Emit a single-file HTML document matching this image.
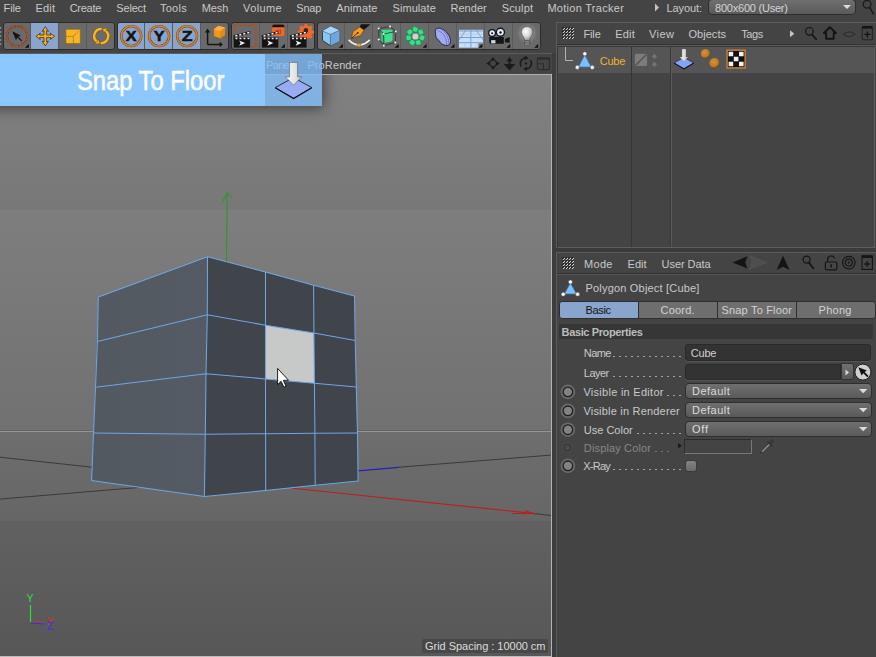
<!DOCTYPE html>
<html lang="en"><head><meta charset="utf-8"><title>Snap To Floor</title>
<style>
html,body{margin:0;padding:0;}
body{width:876px;height:657px;overflow:hidden;background:#444444;position:relative;font-family:"Liberation Sans",sans-serif;}
.t{position:absolute;white-space:pre;line-height:1;font-family:"Liberation Sans",sans-serif;}
.a{position:absolute;box-sizing:border-box;}
svg{position:absolute;overflow:visible;}
.grp{position:absolute;box-sizing:border-box;top:22px;height:28px;background:#6a6a6a;border:1px solid #2c2c2c;border-radius:3px;}
.sep{position:absolute;top:23px;height:26px;width:1px;background:#5a5a5a;}
.sel{position:absolute;top:23px;height:26px;background:#89a5ce;}
.dd{position:absolute;box-sizing:border-box;height:16px;border:1px solid #2e2e2e;border-radius:4px;background:linear-gradient(#6f6f6f,#5a5a5a);}
.fld{position:absolute;box-sizing:border-box;background:#333333;border:1px solid #2a2a2a;border-radius:3px;box-shadow:0 1px 0 #555;}
.tab{position:absolute;box-sizing:border-box;top:301px;height:18px;background:#6e6e6e;border:1px solid #2e2e2e;}
.radio{position:absolute;box-sizing:border-box;width:11px;height:11px;border-radius:50%;background:#808080;border:1.4px solid #1f1f1f;box-shadow:0 0 0 1.9px #6a6a6a;}
.dots{position:absolute;left:0;height:1px;width:876px;}
.dots i{position:absolute;top:0;width:2px;height:1px;background:var(--c);}

</style></head>
<body>
<div class="a" id="menubar" style="left:0;top:0;width:876px;height:20px;">
<span class="t" id="t0" style="left:3.6px;top:2.99px;font-size:11px;color:#c9c9c9;letter-spacing:-0.145px;">File</span>
<span class="t" id="t1" style="left:35.5px;top:2.99px;font-size:11px;color:#c9c9c9;letter-spacing:0.210px;">Edit</span>
<span class="t" id="t2" style="left:69.7px;top:2.99px;font-size:11px;color:#c9c9c9;letter-spacing:-0.286px;">Create</span>
<span class="t" id="t3" style="left:116.3px;top:2.99px;font-size:11px;color:#c9c9c9;letter-spacing:-0.176px;">Select</span>
<span class="t" id="t4" style="left:160.0px;top:2.99px;font-size:11px;color:#c9c9c9;letter-spacing:0.253px;">Tools</span>
<span class="t" id="t5" style="left:201.7px;top:2.99px;font-size:11px;color:#c9c9c9;letter-spacing:-0.102px;">Mesh</span>
<span class="t" id="t6" style="left:243.0px;top:2.99px;font-size:11px;color:#c9c9c9;letter-spacing:0.399px;">Volume</span>
<span class="t" id="t7" style="left:296.3px;top:2.99px;font-size:11px;color:#c9c9c9;letter-spacing:-0.234px;">Snap</span>
<span class="t" id="t8" style="left:336.3px;top:2.99px;font-size:11px;color:#c9c9c9;letter-spacing:0.140px;">Animate</span>
<span class="t" id="t9" style="left:392.5px;top:2.99px;font-size:11px;color:#c9c9c9;letter-spacing:0.072px;">Simulate</span>
<span class="t" id="t10" style="left:450.5px;top:2.99px;font-size:11px;color:#c9c9c9;letter-spacing:0.024px;">Render</span>
<span class="t" id="t11" style="left:501.7px;top:2.99px;font-size:11px;color:#c9c9c9;letter-spacing:0.144px;">Sculpt</span>
<span class="t" id="t12" style="left:547.4px;top:2.99px;font-size:11px;color:#c9c9c9;letter-spacing:0.281px;">Motion Tracker</span>
<span class="t" id="t13" style="left:666.5px;top:2.99px;font-size:11px;color:#c9c9c9;letter-spacing:-0.099px;">Layout:</span>
<svg style="left:654px;top:3px" width="6" height="9"><path d="M1 0.5 L5 4.5 L1 8.5Z" fill="#c4c4c4"/></svg>
<div class="dd" style="left:708px;top:-1px;width:148px;"></div>
<span class="t" id="t14" style="left:715.0px;top:2.69px;font-size:11px;color:#d4d4d4;letter-spacing:-0.218px;">800x600 (User)</span>
<svg style="left:843px;top:5px" width="9" height="5"><path d="M0 0 H8 L4 4Z" fill="#dcdcdc"/></svg>
<svg style="left:860px;top:0px" width="16" height="17" viewBox="860 0 16 17"><circle cx="867.1" cy="4.3" r="3.9" fill="none" stroke="#1a1a1a" stroke-width="1.2"/><path d="M869.6 7.3 L873.8 14.3" stroke="#1a1a1a" stroke-width="1.6"/></svg>
</div>
<div class="a" id="toolbar" style="left:0;top:20px;width:552px;height:32px;">
</div>
<svg style="left:0;top:27px" width="3" height="20"><path d="M0 1h1.2M0 5h1.2M0 9h1.2M0 13h1.2M0 17h1.2" stroke="#c8c8c8" stroke-width="1.2"/></svg>
<div class="grp" style="left:2.50px;width:112.40px;"></div>
<div class="grp" style="left:116.80px;width:112.00px;"></div>
<div class="grp" style="left:230.90px;width:84.50px;"></div>
<div class="grp" style="left:316.50px;width:224.00px;"></div>
<div class="sel" style="left:31.00px;width:27.4px;"></div>
<div class="sel" style="left:117.80px;width:82.50px;border-radius:2px 0 0 2px;"></div>
<div class="sep" style="left:30.30px;"></div>
<div class="sep" style="left:58.20px;"></div>
<div class="sep" style="left:86.10px;"></div>
<div class="sep" style="left:144.20px;"></div>
<div class="sep" style="left:172.10px;"></div>
<div class="sep" style="left:200.00px;"></div>
<div class="sep" style="left:258.70px;"></div>
<div class="sep" style="left:286.60px;"></div>
<div class="sep" style="left:344.30px;"></div>
<div class="sep" style="left:372.20px;"></div>
<div class="sep" style="left:400.10px;"></div>
<div class="sep" style="left:428.00px;"></div>
<div class="sep" style="left:455.90px;"></div>
<div class="sep" style="left:483.80px;"></div>
<div class="sep" style="left:511.70px;"></div>
<div class="a" id="vp-frame" style="left:0;top:53px;width:553px;height:604px;border-top:1px solid #5c5c5c;"></div>
<span class="t" id="t15" style="left:266.0px;top:59.99px;font-size:11px;color:#c9c9c9;letter-spacing:-0.610px;">Panel</span>
<span class="t" id="t16" style="left:307.4px;top:59.99px;font-size:11px;color:#c9c9c9;letter-spacing:0.112px;">ProRender</span>
<div class="a" id="om" style="left:556px;top:22px;width:321px;height:226px;border-left:1px solid #5c5c5c;border-top:1px solid #5c5c5c;"></div>
<div class="a" style="left:557px;top:44px;width:319px;height:1px;background:#333;"></div>
<div class="a" style="left:557px;top:45px;width:319px;height:1px;background:#5a5a5a;"></div>
<div class="a" id="om-tree" style="left:557px;top:46px;width:318px;height:202px;background:#444444;border:1px solid #383838;border-right-color:#5e5e5e;border-bottom-color:#5e5e5e;"></div>
<div class="a" id="om-row" style="left:558px;top:47px;width:316px;height:26px;background:#555555;"></div>
<div class="a" style="left:631px;top:47px;width:1px;height:200px;background:#353535;"></div>
<div class="a" style="left:670px;top:47px;width:1px;height:200px;background:#383838;"></div><div class="a" style="left:671px;top:47px;width:1px;height:200px;background:#5a5a5a;"></div>
<span class="t" id="t17" style="left:583.5px;top:29.19px;font-size:11px;color:#c9c9c9;letter-spacing:-0.145px;">File</span>
<span class="t" id="t18" style="left:615.3px;top:29.19px;font-size:11px;color:#c9c9c9;letter-spacing:0.144px;">Edit</span>
<span class="t" id="t19" style="left:649.0px;top:29.19px;font-size:11px;color:#c9c9c9;letter-spacing:0.448px;">View</span>
<span class="t" id="t20" style="left:688.5px;top:29.19px;font-size:11px;color:#c9c9c9;letter-spacing:0.034px;">Objects</span>
<span class="t" id="t21" style="left:741.2px;top:29.19px;font-size:11px;color:#c9c9c9;letter-spacing:-0.383px;">Tags</span>
<span class="t" id="t22" style="left:599.7px;top:55.79px;font-size:11px;color:#f2b32c;letter-spacing:-0.232px;">Cube</span>
<div class="a" id="am" style="left:556px;top:252px;width:321px;height:406px;border-left:1px solid #5c5c5c;border-top:1px solid #5c5c5c;"></div>
<div class="a" style="left:557px;top:273px;width:319px;height:1px;background:#333;"></div>
<div class="a" style="left:557px;top:274px;width:319px;height:1px;background:#555;"></div>
<div class="a" style="left:552px;top:248px;width:324px;height:4px;background:#3b3b3b;"></div>
<span class="t" id="t23" style="left:584.0px;top:259.49px;font-size:11px;color:#c9c9c9;letter-spacing:0.323px;">Mode</span>
<span class="t" id="t24" style="left:627.6px;top:259.49px;font-size:11px;color:#c9c9c9;letter-spacing:0.010px;">Edit</span>
<span class="t" id="t25" style="left:661.6px;top:259.49px;font-size:11px;color:#c9c9c9;letter-spacing:-0.054px;">User Data</span>
<span class="t" id="t26" style="left:585.5px;top:282.99px;font-size:11px;color:#c9c9c9;letter-spacing:0.191px;">Polygon Object [Cube]</span>
<div class="tab" style="left:559.0px;width:80.0px;background:#89a5ce;border-radius:3px 0 0 3px;"></div>
<span class="t" id="t27" style="left:585.5px;top:305.19px;font-size:11px;color:#141414;letter-spacing:-0.327px;">Basic</span>
<div class="tab" style="left:638.0px;width:80.0px;"></div>
<span class="t" id="t28" style="left:660.6px;top:305.19px;font-size:11px;color:#d2d2d2;letter-spacing:0.194px;">Coord.</span>
<div class="tab" style="left:717.0px;width:80.0px;"></div>
<span class="t" id="t29" style="left:721.5px;top:305.19px;font-size:11px;color:#d2d2d2;letter-spacing:0.184px;">Snap To Floor</span>
<div class="tab" style="left:796.0px;width:80.0px;border-radius:0 3px 3px 0;"></div>
<span class="t" id="t30" style="left:818.6px;top:305.19px;font-size:11px;color:#d2d2d2;letter-spacing:0.272px;">Phong</span>
<div class="a" style="left:559px;top:324px;width:314px;height:15px;background:#363636;"></div>
<span class="t" id="t31" style="left:561.6px;top:326.99px;font-size:11px;color:#bcbcbc;font-weight:bold;letter-spacing:-0.375px;">Basic Properties</span>
<span class="t" id="t32" style="left:583.8px;top:348.19px;font-size:11px;color:#c9c9c9;letter-spacing:-0.581px;">Name</span>
<div class="dots" style="top:356px;--c:#a2a2a2"><i style="left:679px"></i><i style="left:673px"></i><i style="left:667px"></i><i style="left:661px"></i><i style="left:655px"></i><i style="left:649px"></i><i style="left:643px"></i><i style="left:637px"></i><i style="left:631px"></i><i style="left:625px"></i><i style="left:619px"></i><i style="left:613px"></i></div>
<span class="t" id="t33" style="left:583.8px;top:367.79px;font-size:11px;color:#c9c9c9;letter-spacing:-0.533px;">Layer</span>
<div class="dots" style="top:376px;--c:#a2a2a2"><i style="left:679px"></i><i style="left:673px"></i><i style="left:667px"></i><i style="left:661px"></i><i style="left:655px"></i><i style="left:649px"></i><i style="left:643px"></i><i style="left:637px"></i><i style="left:631px"></i><i style="left:625px"></i><i style="left:619px"></i><i style="left:613px"></i></div>
<span class="t" id="t34" style="left:583.4px;top:386.89px;font-size:11px;color:#c9c9c9;letter-spacing:0.280px;">Visible in Editor</span>
<div class="dots" style="top:395px;--c:#a2a2a2"><i style="left:679px"></i><i style="left:673px"></i><i style="left:667px"></i></div>
<span class="t" id="t35" style="left:583.4px;top:405.69px;font-size:11px;color:#c9c9c9;letter-spacing:0.203px;">Visible in Renderer</span>
<span class="t" id="t36" style="left:583.8px;top:424.69px;font-size:11px;color:#c9c9c9;">Use Color</span>
<div class="dots" style="top:433px;--c:#a2a2a2"><i style="left:679px"></i><i style="left:673px"></i><i style="left:667px"></i><i style="left:661px"></i><i style="left:655px"></i><i style="left:649px"></i><i style="left:643px"></i><i style="left:637px"></i></div>
<span class="t" id="t37" style="left:583.8px;top:442.99px;font-size:11px;color:#878787;letter-spacing:0.148px;">Display Color</span>
<div class="dots" style="top:451px;--c:#747474"><i style="left:667px"></i><i style="left:661px"></i><i style="left:655px"></i></div>
<span class="t" id="t38" style="left:583.2px;top:460.59px;font-size:11px;color:#c9c9c9;letter-spacing:-0.741px;">X-Ray</span>
<div class="dots" style="top:469px;--c:#a2a2a2"><i style="left:679px"></i><i style="left:673px"></i><i style="left:667px"></i><i style="left:661px"></i><i style="left:655px"></i><i style="left:649px"></i><i style="left:643px"></i><i style="left:637px"></i><i style="left:631px"></i><i style="left:625px"></i><i style="left:619px"></i><i style="left:613px"></i></div>
<div class="fld" style="left:685px;top:344px;width:186px;height:17px;"></div>
<span class="t" id="t39" style="left:690.7px;top:348.19px;font-size:11px;color:#d0d0d0;letter-spacing:-0.166px;">Cube</span>
<div class="fld" style="left:685px;top:364px;width:156px;height:16px;border-radius:3px 0 0 3px;"></div>
<div class="a" style="left:841px;top:363px;width:12.5px;height:17px;background:linear-gradient(#707070,#5a5a5a);border:1px solid #333;border-radius:0 3px 3px 0;"></div>
<svg style="left:845px;top:369px" width="5" height="7"><path d="M0.5 0.5 L4 3.5 L0.5 6.5Z" fill="#d8d8d8"/></svg>
<div class="dd" style="left:685px;top:383px;width:187px;"></div>
<span class="t" id="t40" style="left:692.0px;top:386.39px;font-size:11px;color:#dcdcdc;letter-spacing:0.490px;">Default</span>
<svg style="left:858.8px;top:388.8px" width="9" height="5"><path d="M0 0 H8.4 L4.2 4.2Z" fill="#dcdcdc"/></svg>
<div class="dd" style="left:685px;top:402px;width:187px;"></div>
<span class="t" id="t41" style="left:692.0px;top:405.39px;font-size:11px;color:#dcdcdc;letter-spacing:0.490px;">Default</span>
<svg style="left:858.8px;top:407.8px" width="9" height="5"><path d="M0 0 H8.4 L4.2 4.2Z" fill="#dcdcdc"/></svg>
<div class="dd" style="left:685px;top:421px;width:187px;"></div>
<span class="t" id="t42" style="left:692.0px;top:424.39px;font-size:11px;color:#dcdcdc;letter-spacing:0.758px;">Off</span>
<svg style="left:858.8px;top:426.8px" width="9" height="5"><path d="M0 0 H8.4 L4.2 4.2Z" fill="#dcdcdc"/></svg>
<svg id="radios" style="left:556px;top:380px" width="24" height="100" viewBox="556 380 24 100"><circle cx="567.9" cy="391.9" r="7.3" fill="#6a6a6a"/><circle cx="567.9" cy="391.9" r="5.45" fill="#1e1e1e"/><circle cx="567.9" cy="391.9" r="4.15" fill="#828282"/><circle cx="567.9" cy="410.8" r="7.3" fill="#6a6a6a"/><circle cx="567.9" cy="410.8" r="5.45" fill="#1e1e1e"/><circle cx="567.9" cy="410.8" r="4.15" fill="#828282"/><circle cx="567.9" cy="429.7" r="7.3" fill="#6a6a6a"/><circle cx="567.9" cy="429.7" r="5.45" fill="#1e1e1e"/><circle cx="567.9" cy="429.7" r="4.15" fill="#828282"/><circle cx="567.9" cy="465.8" r="7.3" fill="#6a6a6a"/><circle cx="567.9" cy="465.8" r="5.45" fill="#1e1e1e"/><circle cx="567.9" cy="465.8" r="4.15" fill="#828282"/><circle cx="567.3" cy="447.5" r="5.3" fill="#4b4b4b"/><circle cx="567.3" cy="447.5" r="4" fill="#383838"/><circle cx="567.3" cy="447.5" r="2.6" fill="#4a4a4a"/></svg>
<svg style="left:678px;top:443px" width="5" height="6"><path d="M0 0 L4 2.8 L0 5.6Z" fill="#1c1c1c"/></svg>
<div class="a" style="left:684px;top:439px;width:68px;height:15px;border:1px solid #777;border-top-color:#2c2c2c;border-left-color:#2c2c2c;background:#444;"></div>
<div class="a" style="left:684.5px;top:459.5px;width:12px;height:12px;border-radius:3px;background:linear-gradient(#828282,#6a6a6a);border:1px solid #3a3a3a;"></div>
<svg id="view3d" style="left:0px;top:74px" width="552" height="583" viewBox="0 0 552 583">
<defs>
<linearGradient id="sky1" x1="0" y1="0" x2="0" y2="1"><stop offset="0" stop-color="#818181"/><stop offset="1" stop-color="#787878"/></linearGradient>
<linearGradient id="sky2" x1="0" y1="0" x2="0" y2="1"><stop offset="0" stop-color="#7e7e7e"/><stop offset="1" stop-color="#717171"/></linearGradient>
<linearGradient id="gnd1" x1="0" y1="0" x2="0" y2="1"><stop offset="0" stop-color="#6e6e6e"/><stop offset="1" stop-color="#666666"/></linearGradient>
<linearGradient id="gnd2" x1="0" y1="0" x2="0" y2="1"><stop offset="0" stop-color="#616161"/><stop offset="1" stop-color="#575757"/></linearGradient>
<linearGradient id="shd" x1="0" y1="0" x2="0" y2="1"><stop offset="0" stop-color="#000" stop-opacity="0.35"/><stop offset="1" stop-color="#000" stop-opacity="0"/></linearGradient>
<linearGradient id="lf" x1="0" y1="0" x2="1" y2="0"><stop offset="0" stop-color="#525960"/><stop offset="1" stop-color="#545b64"/></linearGradient>
</defs>
<rect x="0" y="0" width="552" height="136" fill="url(#sky1)"/>
<rect x="0" y="136" width="552" height="221" fill="url(#sky2)"/>
<rect x="0" y="357" width="552" height="90" fill="url(#gnd1)"/>
<rect x="0" y="447" width="552" height="136" fill="url(#gnd2)"/>
<rect x="0" y="356" width="552" height="1" fill="#646464"/><rect x="0" y="357" width="552" height="1" fill="#969696"/>
<polyline points="0.0,383.2 92.0,393.2" stroke="#3a3a3a" stroke-width="1" fill="none"/>
<polyline points="0.0,425.1 140.6,413.3" stroke="#3a3a3a" stroke-width="1" fill="none"/>
<polyline points="398.0,393.3 552.0,381.0" stroke="#3a3a3a" stroke-width="1" fill="none"/>
<polyline points="534.6,439.6 552.0,441.6" stroke="#3a3a3a" stroke-width="1" fill="none"/>
<polyline points="358.0,396.8 398.5,393.3" stroke="#2222b4" stroke-width="1.2" fill="none"/>
<polyline points="292.4,414.2 534.6,439.6" stroke="#bc1e1e" stroke-width="1.1" fill="none"/>
<polyline points="512.0,439.5 534.6,439.6 524.5,436.6" stroke="#bc1e1e" fill="none" stroke-width="1"/>
<polyline points="227.2,119.5 226.5,188.0" stroke="#229a22" stroke-width="1.0" fill="none"/>
<polyline points="221.6,129.4 227.3,118.8 232.6,124.4" stroke="#229a22" fill="none" stroke-width="1"/>
<polygon points="98.3,223.0 207.5,182.7 204.4,422.5 91.6,406.5" fill="url(#lf)"/>
<polygon points="207.5,182.7 354.5,222.0 358.1,407.0 204.4,422.5" fill="#40444b"/>
<polygon points="265.5,251.2 313.9,259.0 314.4,309.3 265.5,304.9" fill="#c7c9c9"/>
<polyline points="98.3,223.0 207.5,182.7 265.5,198.0 313.6,211.2 354.5,222.0" stroke="#6fa5e2" stroke-width="1.05" fill="none"/>
<polyline points="97.4,267.4 207.3,240.7 265.5,251.2 313.9,259.0 355.2,266.6" stroke="#6fa5e2" stroke-width="1.05" fill="none"/>
<polyline points="95.5,313.3 206.0,299.7 265.5,304.9 314.4,309.3 356.3,313.0" stroke="#6fa5e2" stroke-width="1.05" fill="none"/>
<polyline points="93.5,359.1 205.3,360.3 265.6,359.7 314.9,359.3 357.5,359.0" stroke="#6fa5e2" stroke-width="1.05" fill="none"/>
<polyline points="91.6,406.5 204.4,422.5 265.7,416.5 315.2,411.3 358.1,407.0" stroke="#6fa5e2" stroke-width="1.05" fill="none"/>
<polyline points="98.3,223.0 97.4,267.4 95.5,313.3 93.5,359.1 91.6,406.5" stroke="#6fa5e2" stroke-width="1.05" fill="none"/>
<polyline points="207.5,182.7 207.3,240.7 206.0,299.7 205.3,360.3 204.4,422.5" stroke="#6fa5e2" stroke-width="1.05" fill="none"/>
<polyline points="265.5,198.0 265.5,251.2 265.5,304.9 265.6,359.7 265.7,416.5" stroke="#6fa5e2" stroke-width="1.05" fill="none"/>
<polyline points="313.6,211.2 313.9,259.0 314.4,309.3 314.9,359.3 315.2,411.3" stroke="#6fa5e2" stroke-width="1.05" fill="none"/>
<polyline points="354.5,222.0 355.2,266.6 356.3,313.0 357.5,359.0 358.1,407.0" stroke="#6fa5e2" stroke-width="1.05" fill="none"/>
<polyline points="30.5,531.0 30.5,548.5" stroke="#30e030" stroke-width="1.2" fill="none"/>
<polyline points="30.5,548.5 43.0,547.3" stroke="#d03030" stroke-width="1" fill="none"/>
<polyline points="30.5,549.0 43.5,550.0" stroke="#3030e0" stroke-width="1" fill="none"/>
</svg>
<span class="t" id="t43" style="left:26.6px;top:593.41px;font-size:10.5px;color:#30e030;">Y</span>
<span class="t" id="t44" style="left:46.8px;top:616.41px;font-size:10.5px;color:#d83030;">X</span>
<span class="t" id="t45" style="left:47.0px;top:620.61px;font-size:10.5px;color:#3434f0;">Z</span>
<div class="a" style="left:0;top:74px;width:552px;height:1px;background:#b0b0b0;"></div>
<div class="a" style="left:551px;top:74px;width:1px;height:583px;background:#b4b4b4;"></div>
<div class="a" style="left:0;top:656px;width:552px;height:1px;background:#bcbcbc;"></div>
<div class="a" style="left:552px;top:53px;width:4px;height:604px;background:#3d3d3d;"></div>
<div class="a" style="left:422px;top:639px;width:126px;height:14px;background:rgba(62,62,62,0.6);border-radius:2px;"></div>
<span class="t" id="t46" style="left:425.0px;top:640.99px;font-size:11px;color:#dcdcdc;letter-spacing:-0.026px;">Grid Spacing : 10000 cm</span>
<div class="a" style="left:0;top:75px;width:551px;height:120px;overflow:hidden;"><div class="a" style="left:-20px;top:-21px;width:342px;height:52px;box-shadow:0 0 14px 2px rgba(0,0,0,0.5);"></div></div>
<div class="a" id="banner" style="left:0;top:54px;width:265px;height:52px;background:#8cc8fe;"></div>
<div class="a" id="banner2" style="left:265px;top:54px;width:57px;height:52px;background:rgba(130,190,250,0.80);"></div>
<span class="t" id="t47" style="left:77.0px;top:67.10px;font-size:28px;color:#ffffff;transform-origin:0 0;transform:scaleX(0.848);-webkit-text-stroke:0.55px #fff;">Snap To Floor</span>
<svg style="left:270px;top:58px" width="48" height="46" viewBox="270 58 48 46">
<defs><linearGradient id="arw" x1="0" y1="0" x2="1" y2="0"><stop offset="0" stop-color="#f4f4f4"/><stop offset="0.6" stop-color="#e4e4e4"/><stop offset="1" stop-color="#bdbdbd"/></linearGradient></defs>
<path d="M275.2 87.6 L293.5 77.6 L311.8 87.6 L293.6 98.4Z" fill="#98acf2" stroke="#1c1c2a" stroke-width="0.9" stroke-linejoin="round"/>
<path d="M275.2 87.8 L293.6 98.6 L311.8 87.8" fill="none" stroke="#14141c" stroke-width="1.3"/>
<path d="M289.5 62.4 H297.6 V76.8 H301.7 L293.6 85.2 L285.4 76.8 H289.5Z" fill="url(#arw)" stroke="#4a5260" stroke-width="0.55"/>
</svg>
<svg style="left:277px;top:367px" width="14" height="22" viewBox="0 0 14 22">
<path d="M0.6 1.4 V17.6 L4.1 14.3 L6.9 20.2 L9 19.2 L6.4 13.3 H11.5Z" fill="#ffffff" stroke="#0c0c0c" stroke-width="0.9" stroke-linejoin="miter"/></svg>
<svg id="icons" style="left:0;top:0" width="876" height="657" viewBox="0 0 876 657">
<defs>
<linearGradient id="cubeT" x1="0" y1="0" x2="0" y2="1"><stop offset="0" stop-color="#b9dcf8"/><stop offset="1" stop-color="#8fc2ee"/></linearGradient>
<radialGradient id="sph" cx="0.42" cy="0.38" r="0.62"><stop offset="0" stop-color="#d4923a"/><stop offset="0.7" stop-color="#c07a26"/><stop offset="1" stop-color="#6e4010"/></radialGradient>
<linearGradient id="arw2" x1="0" y1="0" x2="1" y2="0"><stop offset="0" stop-color="#fafafa"/><stop offset="1" stop-color="#c4c4c4"/></linearGradient>
<radialGradient id="bulb" cx="0.38" cy="0.36" r="0.7"><stop offset="0" stop-color="#ffffff"/><stop offset="0.5" stop-color="#d8d8d8"/><stop offset="1" stop-color="#8c8c8c"/></radialGradient>
<radialGradient id="glow" cx="0.5" cy="0.5" r="0.5"><stop offset="0" stop-color="#fff" stop-opacity="0.4"/><stop offset="1" stop-color="#fff" stop-opacity="0"/></radialGradient>
</defs>
<circle cx="17.2" cy="36.1" r="10.2" fill="none" stroke="#5a3a2a" stroke-width="2"/><circle cx="17.2" cy="36.1" r="10.2" fill="none" stroke="#dc6428" stroke-width="1.2" stroke-dasharray="1.1 0.4"/>
<path d="M12.2 31.2 L20.9 35.6 L18.3 36.6 L22.2 40.4 L21.3 41.3 L17.4 37.5 L16 40.3Z" fill="#151515"/>
<path d="M24.9 47.7 H28.9 V43.7Z" fill="#121212"/>
<path d="M45.3 26.7 L48.5 31.4 L46.6 30.7 V35 H51 L50.3 33.1 L54.5 36.3 L50.3 39.5 L51 37.6 H46.6 V41.9 L48.5 41.2 L45.3 45.8 L42.1 41.2 L44 41.9 V37.6 H39.6 L40.3 39.5 L36 36.3 L40.3 33.1 L39.6 35 H44 V30.7 L42.1 31.4Z" fill="#f6ae22" stroke="#4a3412" stroke-width="0.8" stroke-linejoin="round"/>
<rect x="65.9" y="29.3" width="14.4" height="14.3" rx="1" fill="#f8b424" stroke="#8a6412" stroke-width="0.6"/><path d="M66 36.4 H73.4 V43.4 M73.4 36.4 L78.4 31.2" fill="none" stroke="#7a6a20" stroke-width="0.8" stroke-dasharray="1.3 0.8"/>
<path d="M101.8 29.1 A7 7 0 0 0 97.2 41.8" fill="none" stroke="#6a4a10" stroke-width="3.3"/><path d="M101.8 29.1 A7 7 0 0 0 97.2 41.8" fill="none" stroke="#f8b424" stroke-width="2.5"/>
<path d="M100.6 43.1 A7 7 0 0 0 105.2 30.4" fill="none" stroke="#6a4a10" stroke-width="3.3"/><path d="M100.6 43.1 A7 7 0 0 0 105.2 30.4" fill="none" stroke="#f8b424" stroke-width="2.5"/>
<path d="M99.9 43.7 L94.6 43.9 L98.6 39.4Z" fill="#f8b424" stroke="#6a4a10" stroke-width="0.5"/><path d="M102.5 28.5 L107.9 28.3 L103.8 32.8Z" fill="#f8b424" stroke="#6a4a10" stroke-width="0.5"/>
<circle cx="131.2" cy="36.1" r="10" fill="none" stroke="#5e4226" stroke-width="2.4"/><circle cx="131.2" cy="36.1" r="10" fill="none" stroke="#dc8228" stroke-width="1.5"/>
<text x="131.2" y="40.9" text-anchor="middle" textLength="10.8" lengthAdjust="spacingAndGlyphs" style="font-family:'Liberation Sans',sans-serif;font-weight:700;font-size:14px" fill="#141414" stroke="#141414" stroke-width="0.5">X</text>
<circle cx="159.1" cy="36.1" r="10" fill="none" stroke="#5e4226" stroke-width="2.4"/><circle cx="159.1" cy="36.1" r="10" fill="none" stroke="#dc8228" stroke-width="1.5"/>
<text x="159.1" y="40.9" text-anchor="middle" textLength="10.8" lengthAdjust="spacingAndGlyphs" style="font-family:'Liberation Sans',sans-serif;font-weight:700;font-size:14px" fill="#141414" stroke="#141414" stroke-width="0.5">Y</text>
<circle cx="187.1" cy="36.1" r="10" fill="none" stroke="#5e4226" stroke-width="2.4"/><circle cx="187.1" cy="36.1" r="10" fill="none" stroke="#dc8228" stroke-width="1.5"/>
<text x="187.1" y="40.9" text-anchor="middle" textLength="10.8" lengthAdjust="spacingAndGlyphs" style="font-family:'Liberation Sans',sans-serif;font-weight:700;font-size:14px" fill="#141414" stroke="#141414" stroke-width="0.5">Z</text>
<path d="M207.6 44.4 V30 M207.6 44.4 H220.6" stroke="#151515" stroke-width="1.5" fill="none"/><path d="M205 32.6 L207.6 28.6 L210.2 32.6Z M219.6 41.8 L223 44.4 L219.6 47Z" fill="#151515"/>
<path d="M213.6 29.2 L218.4 25.8 L225.2 27.6 L225 35 L220.2 38.4 L213.8 36.4Z" fill="#f2981e" stroke="#8a5610" stroke-width="0.5"/><path d="M213.6 29.2 L218.4 25.8 L225.2 27.6 L220.2 31Z" fill="#f8b04a"/><path d="M220.2 31 L225.2 27.6 L225 35 L220.2 38.4Z" fill="#e08c18"/>
<path d="M234.9 32.4 V25.3 H255.9 V46.8 H251.2" fill="none" stroke="#a4522a" stroke-width="1.5"/>
<rect x="233.7" y="38.2" width="16.4" height="9.4" fill="#141414"/><path d="M233.29999999999998 35.2 L250.1 31 L250.4 33.4 L233.7 37.6Z" fill="#1a1a1a"/><path d="M235.1 35.3 l2.1 -0.55 l0.3 1.5 l-2.1 0.55Z" fill="#f4f4f4"/><path d="M239.1 34.3 l2.1 -0.55 l0.3 1.5 l-2.1 0.55Z" fill="#f4f4f4"/><path d="M243.1 33.3 l2.1 -0.55 l0.3 1.5 l-2.1 0.55Z" fill="#f4f4f4"/><path d="M247.1 32.2 l2.1 -0.55 l0.3 1.5 l-2.1 0.55Z" fill="#f4f4f4"/><rect x="233.7" y="37.3" width="16.4" height="2.4" fill="#1a1a1a"/><rect x="235.5" y="37.7" width="1.9" height="1.5" fill="#ececec"/><rect x="239.5" y="37.7" width="1.9" height="1.5" fill="#ececec"/><rect x="243.5" y="37.7" width="1.9" height="1.5" fill="#ececec"/><rect x="247.5" y="37.7" width="1.9" height="1.5" fill="#ececec"/><path d="M239.1 40.6 L245.1 43.1 L239.1 45.7 L240.7 43.1Z" fill="#f6f6f6"/>
<rect x="272.2" y="24.6" width="12.2" height="11.4" rx="1.6" fill="#f4662c"/><path d="M272.2 27.2 V26.2 a1.6 1.6 0 0 1 1.6 -1.6 h9 a1.6 1.6 0 0 1 1.6 1.6 V27.2Z" fill="#141414"/><path d="M275.6 30.4 H280.6 V33.6 H276" fill="none" stroke="#c04a1c" stroke-width="1.2"/>
<rect x="261.9" y="38.2" width="16.4" height="9.4" fill="#141414"/><path d="M261.5 35.2 L278.29999999999995 31 L278.59999999999997 33.4 L261.9 37.6Z" fill="#1a1a1a"/><path d="M263.3 35.3 l2.1 -0.55 l0.3 1.5 l-2.1 0.55Z" fill="#f4f4f4"/><path d="M267.3 34.3 l2.1 -0.55 l0.3 1.5 l-2.1 0.55Z" fill="#f4f4f4"/><path d="M271.3 33.3 l2.1 -0.55 l0.3 1.5 l-2.1 0.55Z" fill="#f4f4f4"/><path d="M275.3 32.2 l2.1 -0.55 l0.3 1.5 l-2.1 0.55Z" fill="#f4f4f4"/><rect x="261.9" y="37.3" width="16.4" height="2.4" fill="#1a1a1a"/><rect x="263.7" y="37.7" width="1.9" height="1.5" fill="#ececec"/><rect x="267.7" y="37.7" width="1.9" height="1.5" fill="#ececec"/><rect x="271.7" y="37.7" width="1.9" height="1.5" fill="#ececec"/><rect x="275.7" y="37.7" width="1.9" height="1.5" fill="#ececec"/><path d="M267.29999999999995 40.6 L273.29999999999995 43.1 L267.29999999999995 45.7 L268.9 43.1Z" fill="#f6f6f6"/>
<path d="M280.9 47.7 H284.9 V43.7Z" fill="#121212"/>
<g transform="translate(305.9,30.4) scale(0.95)"><path d="M-1.3 -6.8 h2.6 l0.5 1.9 l1.6 0.7 l1.8 -1 l1.8 1.8 l-1 1.8 l0.7 1.6 l1.9 0.5 v2.6 l-1.9 0.5 l-0.7 1.6 l1 1.8 l-1.8 1.8 l-1.8 -1 l-1.6 0.7 l-0.5 1.9 h-2.6 l-0.5 -1.9 l-1.6 -0.7 l-1.8 1 l-1.8 -1.8 l1 -1.8 l-0.7 -1.6 l-1.9 -0.5 v-2.6 l1.9 -0.5 l0.7 -1.6 l-1 -1.8 l1.8 -1.8 l1.8 1 l1.6 -0.7Z" fill="#f4662c"/><circle r="2.4" fill="#2a2a2a"/></g>
<rect x="290.2" y="38.2" width="16.4" height="9.4" fill="#141414"/><path d="M289.8 35.2 L306.59999999999997 31 L306.9 33.4 L290.2 37.6Z" fill="#1a1a1a"/><path d="M291.6 35.3 l2.1 -0.55 l0.3 1.5 l-2.1 0.55Z" fill="#f4f4f4"/><path d="M295.6 34.3 l2.1 -0.55 l0.3 1.5 l-2.1 0.55Z" fill="#f4f4f4"/><path d="M299.6 33.3 l2.1 -0.55 l0.3 1.5 l-2.1 0.55Z" fill="#f4f4f4"/><path d="M303.6 32.2 l2.1 -0.55 l0.3 1.5 l-2.1 0.55Z" fill="#f4f4f4"/><rect x="290.2" y="37.3" width="16.4" height="2.4" fill="#1a1a1a"/><rect x="292.0" y="37.7" width="1.9" height="1.5" fill="#ececec"/><rect x="296.0" y="37.7" width="1.9" height="1.5" fill="#ececec"/><rect x="300.0" y="37.7" width="1.9" height="1.5" fill="#ececec"/><rect x="304.0" y="37.7" width="1.9" height="1.5" fill="#ececec"/><path d="M295.59999999999997 40.6 L301.59999999999997 43.1 L295.59999999999997 45.7 L297.2 43.1Z" fill="#f6f6f6"/>
<path d="M322.3 31 L330.7 26.3 L339.6 30.3 L339.6 41.2 L330.4 45.7 L322.6 40.5Z" fill="#8cc4f4" stroke="#24303c" stroke-width="0.9" stroke-linejoin="round"/>
<path d="M322.3 31 L330.7 26.3 L339.6 30.3 L330.4 34.4Z" fill="#a9d4f8"/><path d="M330.4 34.4 L339.6 30.3 L339.6 41.2 L330.4 45.7Z" fill="#6da7de"/><path d="M322.3 31 L330.4 34.4 L339.6 30.3 M330.4 34.4 V45.7" fill="none" stroke="#2c3c4c" stroke-width="0.5"/>
<path d="M338.8 47.7 H342.8 V43.7Z" fill="#121212"/>
<path d="M360.9 24.2 H370.6 L364 29.8 L359.8 26.8Z" fill="#141414"/>
<path d="M359.6 27 L364 30.2 L360.6 35.6 L351.3 38.6 L353 31.6Z" fill="#f49a2a" stroke="#5a300a" stroke-width="0.6" stroke-linejoin="round"/><path d="M351.6 38.3 L357.6 33" stroke="#3a2006" stroke-width="0.9"/><circle cx="357.8" cy="32.8" r="0.9" fill="#2a1604"/>
<path d="M348.6 39.9 Q359 50.2 369.8 39.9" fill="none" stroke="#f2f2f2" stroke-width="1.5"/><circle cx="359" cy="45.2" r="1.9" fill="#f4a020" stroke="#7a4a0a" stroke-width="0.4"/>
<path d="M366.8 47.7 H370.8 V43.7Z" fill="#121212"/>
<path d="M381 31 Q381 29.6 382.4 29.7 L391.4 29.7 Q392.6 29.8 392.6 31 V39.6 Q392.4 41 391 41.4 L385 42.7 Q383.4 42.8 382.6 42 L381.2 40.6 Q380.8 40 380.9 39Z" fill="#3ee08c"/><path d="M381 30.6 L384.4 33.4 L384.6 42.6 L381 40Z" fill="#2cc474"/>
<path d="M378.7 28.6 L390 26.5 L395.8 31.5 L383.6 34Z M378.7 28.6 L378.8 39.5 L383.8 45.5 L383.6 34 M383.8 45.5 L395.3 42.5 L395.8 31.5" fill="none" stroke="#2e2e2e" stroke-width="0.8"/>
<circle cx="378.7" cy="28.6" r="1" fill="#f6f6f6"/>
<circle cx="390" cy="26.5" r="1" fill="#f6f6f6"/>
<circle cx="395.8" cy="31.5" r="1" fill="#f6f6f6"/>
<circle cx="383.6" cy="34" r="1" fill="#f6f6f6"/>
<circle cx="378.8" cy="39.5" r="1" fill="#f6f6f6"/>
<circle cx="383.8" cy="45.5" r="1" fill="#f6f6f6"/>
<circle cx="395.3" cy="42.5" r="1" fill="#f6f6f6"/>
<path d="M394.7 47.7 H398.7 V43.7Z" fill="#121212"/>
<rect x="412.6" y="26.8" width="5.4" height="5.2" rx="1.4" fill="#3cdc88" stroke="#188a4c" stroke-width="0.7" transform="rotate(15 415.3 29.4)"/>
<rect x="418.0" y="29.4" width="5.4" height="5.2" rx="1.4" fill="#3cdc88" stroke="#188a4c" stroke-width="0.7" transform="rotate(66 420.7 32.0)"/>
<rect x="419.3" y="35.2" width="5.4" height="5.2" rx="1.4" fill="#3cdc88" stroke="#188a4c" stroke-width="0.7" transform="rotate(117 422.0 37.8)"/>
<rect x="415.6" y="39.9" width="5.4" height="5.2" rx="1.4" fill="#3cdc88" stroke="#188a4c" stroke-width="0.7" transform="rotate(168 418.3 42.5)"/>
<rect x="409.6" y="39.9" width="5.4" height="5.2" rx="1.4" fill="#3cdc88" stroke="#188a4c" stroke-width="0.7" transform="rotate(219 412.3 42.5)"/>
<rect x="405.9" y="35.2" width="5.4" height="5.2" rx="1.4" fill="#3cdc88" stroke="#188a4c" stroke-width="0.7" transform="rotate(270 408.6 37.8)"/>
<rect x="407.2" y="29.4" width="5.4" height="5.2" rx="1.4" fill="#3cdc88" stroke="#188a4c" stroke-width="0.7" transform="rotate(321 409.9 32.0)"/>
<rect x="412.4" y="33.6" width="6" height="6" rx="2" fill="#d4d4d4" stroke="#8a8a8a" stroke-width="0.5"/>
<path d="M422.6 47.7 H426.6 V43.7Z" fill="#121212"/>
<path d="M435.4 31.2 C435.2 28.6 438.4 27.4 441.4 28.6 C446.6 30.8 451.4 37 450.4 42.8 C450 44.6 447.6 46 445.4 45.4 C443 44.6 441.2 44.2 440.4 42.6 C439.6 41 438.6 39.8 437.2 39 C435.4 37.6 435.6 34 435.4 31.2Z" fill="#a2abf2" stroke="#1c1e3a" stroke-width="0.9"/>
<path d="M437.8 30.8 C442.4 31.6 446.8 37 446.6 44.6 M440.6 29.2 C445.4 31.4 449 36.8 448.8 43.6" fill="none" stroke="#5a64b4" stroke-width="0.7"/>
<path d="M450.5 47.7 H454.5 V43.7Z" fill="#121212"/>
<rect x="459" y="29.8" width="24.1" height="17.9" fill="#c6dffa"/>
<path d="M459 31 H483.1 M459 37.5 H483.1 M459 42.7 H483.1 M470.9 29.8 V47.7 M466 29.8 L459 40 M476 29.8 L483.1 40" stroke="#7a9ed0" stroke-width="1" fill="none"/>
<path d="M459 34.2 H483.1 M464.8 42.7 V47.7 M477 42.7 V47.7" stroke="#a8c4ec" stroke-width="0.7" fill="none"/>
<rect x="478.4" y="43.4" width="4.7" height="4.3" fill="#6a6a6a"/>
<path d="M478.4 47.7 H482.4 V43.7Z" fill="#121212"/>
<circle cx="492.1" cy="33" r="4" fill="#151515"/><circle cx="500.4" cy="32.3" r="4.7" fill="#151515"/><circle cx="492.1" cy="33" r="2.7" fill="#dcecfc"/><circle cx="500.4" cy="32.3" r="3.3" fill="#dcecfc"/><circle cx="492.1" cy="33.2" r="1" fill="#151515"/><circle cx="500.5" cy="32.5" r="1.2" fill="#151515"/>
<path d="M489.2 37 H503.8 V43.8 H490.2 L489.2 42Z" fill="#151515"/><path d="M504.9 39 L509.7 37.1 V42.7 L504.9 42.2Z" fill="#151515"/><rect x="491.2" y="40.2" width="4.2" height="3.1" fill="#dcecfc"/><path d="M493.3 40.2 V43.3 M491.2 41.8 H495.4" stroke="#9ab0c8" stroke-width="0.4"/>
<path d="M506.3 47.7 H510.3 V43.7Z" fill="#121212"/>
<circle cx="527.2" cy="33.4" r="10.5" fill="url(#glow)"/>
<path d="M527.2 26.6 C522.4 26.6 520.6 30.8 521.8 34 C522.8 36.6 524.4 38 524.6 40.4 H529.6 C529.8 38 531.6 36.6 532.6 34 C533.8 30.8 532 26.6 527.2 26.6Z" fill="url(#bulb)" stroke="#555555" stroke-width="0.7"/>
<rect x="524.6" y="40.6" width="5" height="4.8" rx="0.9" fill="#9a9a9a" stroke="#3e3e3e" stroke-width="0.6"/><path d="M524.6 42.2 H529.6 M524.6 43.8 H529.6" stroke="#3e3e3e" stroke-width="0.6"/>
<path d="M534.2 47.7 H538.2 V43.7Z" fill="#121212"/>
<path d="M493 57.2 L495.5 61 L493 60.2 L490.5 61Z M493 69.6 L495.5 65.8 L493 66.6 L490.5 65.8Z M486.6 63.4 L490.6 60.9 L489.8 63.4 L490.6 65.9Z M499.4 63.4 L495.4 60.9 L496.2 63.4 L495.4 65.9Z" fill="#1b1b1b" stroke="#1b1b1b" stroke-width="0.5" stroke-linejoin="round"/>
<path d="M509.5 57 L512.6 61.2 H510.4 V64 H515.4 L509.5 70.4 L503.6 64 H508.6 V61.2 H506.4Z" fill="#1b1b1b"/>
<path d="M521.4 66.6 A5.4 5.4 0 0 1 525.4 58 M530.4 60.2 A5.4 5.4 0 0 1 526.4 68.8" fill="none" stroke="#1b1b1b" stroke-width="1.5"/><path d="M524.8 55.6 L528.6 58 L524.8 60.4Z M527 66.4 L523.2 68.8 L527 71.2Z" fill="#1b1b1b"/><circle cx="525.9" cy="63.4" r="1.2" fill="#1b1b1b"/>
<rect x="537.4" y="58" width="12" height="11.6" rx="1.6" fill="none" stroke="#2c2c2c" stroke-width="1.2"/><path d="M537.4 58.6 H549.4" stroke="#2c2c2c" stroke-width="2"/><path d="M537.4 63.8 H543.4 V69.6" fill="none" stroke="#2c2c2c" stroke-width="1.1"/>
<g shape-rendering="crispEdges"><path d="M563 27h1v1h-1zM562 28h1v1h-1z" fill="#1a1a1a"/><path d="M564 28h1v1h-1zM563 29h1v1h-1z" fill="#d6d6d6"/><path d="M566 27h1v1h-1zM565 28h1v1h-1z" fill="#1a1a1a"/><path d="M567 28h1v1h-1zM566 29h1v1h-1z" fill="#d6d6d6"/><path d="M569 27h1v1h-1zM568 28h1v1h-1z" fill="#1a1a1a"/><path d="M570 28h1v1h-1zM569 29h1v1h-1z" fill="#d6d6d6"/><path d="M572 27h1v1h-1zM571 28h1v1h-1z" fill="#1a1a1a"/><path d="M573 28h1v1h-1zM572 29h1v1h-1z" fill="#d6d6d6"/><path d="M563 30h1v1h-1zM562 31h1v1h-1z" fill="#1a1a1a"/><path d="M564 31h1v1h-1zM563 32h1v1h-1z" fill="#d6d6d6"/><path d="M566 30h1v1h-1zM565 31h1v1h-1z" fill="#1a1a1a"/><path d="M567 31h1v1h-1zM566 32h1v1h-1z" fill="#d6d6d6"/><path d="M569 30h1v1h-1zM568 31h1v1h-1z" fill="#1a1a1a"/><path d="M570 31h1v1h-1zM569 32h1v1h-1z" fill="#d6d6d6"/><path d="M572 30h1v1h-1zM571 31h1v1h-1z" fill="#1a1a1a"/><path d="M573 31h1v1h-1zM572 32h1v1h-1z" fill="#d6d6d6"/><path d="M563 33h1v1h-1zM562 34h1v1h-1z" fill="#1a1a1a"/><path d="M564 34h1v1h-1zM563 35h1v1h-1z" fill="#d6d6d6"/><path d="M566 33h1v1h-1zM565 34h1v1h-1z" fill="#1a1a1a"/><path d="M567 34h1v1h-1zM566 35h1v1h-1z" fill="#d6d6d6"/><path d="M569 33h1v1h-1zM568 34h1v1h-1z" fill="#1a1a1a"/><path d="M570 34h1v1h-1zM569 35h1v1h-1z" fill="#d6d6d6"/><path d="M572 33h1v1h-1zM571 34h1v1h-1z" fill="#1a1a1a"/><path d="M573 34h1v1h-1zM572 35h1v1h-1z" fill="#d6d6d6"/><path d="M563 36h1v1h-1zM562 37h1v1h-1z" fill="#1a1a1a"/><path d="M564 37h1v1h-1zM563 38h1v1h-1z" fill="#d6d6d6"/><path d="M566 36h1v1h-1zM565 37h1v1h-1z" fill="#1a1a1a"/><path d="M567 37h1v1h-1zM566 38h1v1h-1z" fill="#d6d6d6"/><path d="M569 36h1v1h-1zM568 37h1v1h-1z" fill="#1a1a1a"/><path d="M570 37h1v1h-1zM569 38h1v1h-1z" fill="#d6d6d6"/><path d="M572 36h1v1h-1zM571 37h1v1h-1z" fill="#1a1a1a"/><path d="M573 37h1v1h-1zM572 38h1v1h-1z" fill="#d6d6d6"/></g>
<g shape-rendering="crispEdges"><path d="M563 257h1v1h-1zM562 258h1v1h-1z" fill="#1a1a1a"/><path d="M564 258h1v1h-1zM563 259h1v1h-1z" fill="#d6d6d6"/><path d="M566 257h1v1h-1zM565 258h1v1h-1z" fill="#1a1a1a"/><path d="M567 258h1v1h-1zM566 259h1v1h-1z" fill="#d6d6d6"/><path d="M569 257h1v1h-1zM568 258h1v1h-1z" fill="#1a1a1a"/><path d="M570 258h1v1h-1zM569 259h1v1h-1z" fill="#d6d6d6"/><path d="M572 257h1v1h-1zM571 258h1v1h-1z" fill="#1a1a1a"/><path d="M573 258h1v1h-1zM572 259h1v1h-1z" fill="#d6d6d6"/><path d="M563 260h1v1h-1zM562 261h1v1h-1z" fill="#1a1a1a"/><path d="M564 261h1v1h-1zM563 262h1v1h-1z" fill="#d6d6d6"/><path d="M566 260h1v1h-1zM565 261h1v1h-1z" fill="#1a1a1a"/><path d="M567 261h1v1h-1zM566 262h1v1h-1z" fill="#d6d6d6"/><path d="M569 260h1v1h-1zM568 261h1v1h-1z" fill="#1a1a1a"/><path d="M570 261h1v1h-1zM569 262h1v1h-1z" fill="#d6d6d6"/><path d="M572 260h1v1h-1zM571 261h1v1h-1z" fill="#1a1a1a"/><path d="M573 261h1v1h-1zM572 262h1v1h-1z" fill="#d6d6d6"/><path d="M563 263h1v1h-1zM562 264h1v1h-1z" fill="#1a1a1a"/><path d="M564 264h1v1h-1zM563 265h1v1h-1z" fill="#d6d6d6"/><path d="M566 263h1v1h-1zM565 264h1v1h-1z" fill="#1a1a1a"/><path d="M567 264h1v1h-1zM566 265h1v1h-1z" fill="#d6d6d6"/><path d="M569 263h1v1h-1zM568 264h1v1h-1z" fill="#1a1a1a"/><path d="M570 264h1v1h-1zM569 265h1v1h-1z" fill="#d6d6d6"/><path d="M572 263h1v1h-1zM571 264h1v1h-1z" fill="#1a1a1a"/><path d="M573 264h1v1h-1zM572 265h1v1h-1z" fill="#d6d6d6"/><path d="M563 266h1v1h-1zM562 267h1v1h-1z" fill="#1a1a1a"/><path d="M564 267h1v1h-1zM563 268h1v1h-1z" fill="#d6d6d6"/><path d="M566 266h1v1h-1zM565 267h1v1h-1z" fill="#1a1a1a"/><path d="M567 267h1v1h-1zM566 268h1v1h-1z" fill="#d6d6d6"/><path d="M569 266h1v1h-1zM568 267h1v1h-1z" fill="#1a1a1a"/><path d="M570 267h1v1h-1zM569 268h1v1h-1z" fill="#d6d6d6"/><path d="M572 266h1v1h-1zM571 267h1v1h-1z" fill="#1a1a1a"/><path d="M573 267h1v1h-1zM572 268h1v1h-1z" fill="#d6d6d6"/></g>
<path d="M790 30.2 L794.4 33.7 L790 37.2Z" fill="#c4c4c4"/>
<circle cx="809.4" cy="31.3" r="3.8" fill="none" stroke="#161616" stroke-width="1.2"/><path d="M811.9 34.4 L816.6 39.8" stroke="#161616" stroke-width="1.6"/>
<path d="M829.9 27.2 L835.9 33 H833.7 V38.8 H826.1 V33 H823.9Z" fill="none" stroke="#141414" stroke-width="1.9" stroke-linejoin="round"/>
<path d="M843.2 34.2 Q849.2 29.6 855.2 34.2 Q849.2 38.8 843.2 34.2Z" fill="none" stroke="#2a2a2a" stroke-width="1"/>
<rect x="862.2" y="26.4" width="10.2" height="13.4" rx="0.8" fill="none" stroke="#222" stroke-width="1"/><path d="M862.2 27.4 H872.4" stroke="#141414" stroke-width="2.4"/><path d="M864.4 34.4 H870.4 M867.4 31.4 V37.4" stroke="#141414" stroke-width="1.4"/>
<path d="M565.5 47 V60.5 H573" fill="none" stroke="#b4b4b4" stroke-width="1"/>
<path d="M584.8 54.8 L578.5 67.0 L591.1 67.0Z" fill="#7cc0f8" stroke="#3c78b4" stroke-width="0.7"/><circle cx="584.8" cy="53.8" r="2.05" fill="#fafafa" stroke="#4a4a4a" stroke-width="0.5"/><circle cx="577.3" cy="67.4" r="2.05" fill="#fafafa" stroke="#4a4a4a" stroke-width="0.5"/><circle cx="592.3" cy="67.4" r="2.05" fill="#fafafa" stroke="#4a4a4a" stroke-width="0.5"/>
<path d="M570.4 283.0 L564.4 293.9 L576.4 293.9Z" fill="#7cc0f8" stroke="#3c78b4" stroke-width="0.7"/><circle cx="570.4" cy="282.0" r="2.05" fill="#fafafa" stroke="#4a4a4a" stroke-width="0.5"/><circle cx="563.2" cy="294.3" r="2.05" fill="#fafafa" stroke="#4a4a4a" stroke-width="0.5"/><circle cx="577.6" cy="294.3" r="2.05" fill="#fafafa" stroke="#4a4a4a" stroke-width="0.5"/>
<rect x="634.8" y="53.8" width="12.3" height="12.3" rx="1.6" fill="#7c7c7c"/><path d="M635.6 65.2 L646.4 54.6" stroke="#555555" stroke-width="1.5"/>
<path d="M654.4 53.8 l2.6 2.6 l-2.6 2.6 l-2.6 -2.6Z M654.4 61.8 l2.6 2.6 l-2.6 2.6 l-2.6 -2.6Z" fill="#727272"/>
<path d="M674.1 63 L683.9 57.4 L693.7 63 L683.9 68.8Z" fill="#86a2f2" stroke="#1c1c28" stroke-width="0.6"/><path d="M674.1 63.1 L683.9 68.9 L693.7 63.1" fill="none" stroke="#12121a" stroke-width="1.1"/>
<path d="M682 49.1 H686 V57.1 H688.2 L684 61.4 L679.7 57.1 H682Z" fill="url(#arw2)" stroke="#6a6a6a" stroke-width="0.3"/>
<circle cx="705.5" cy="53.8" r="4.7" fill="url(#sph)"/><circle cx="714.5" cy="63.2" r="5.1" fill="url(#sph)"/>
<rect x="727.1" y="50.2" width="18" height="17.7" fill="#101010" stroke="#d88a30" stroke-width="1.3"/>
<path d="M728.6 51.8 h4.6 v4.4 h-4.6Z M739 51.8 h4.6 v4.4 h-4.6Z M733.8 56.8 h4.6 v4.4 h-4.6Z M728.6 61.8 h4.6 v4.4 h-4.6Z M739 61.8 h4.6 v4.4 h-4.6Z" fill="#f0f0f0"/>
<path d="M732.6 262.4 L747.4 256.2 L745.2 262.4 L747.4 268.6Z" fill="#141414"/>
<path d="M767 262.4 L749.4 255.4 L752 262.4 L749.4 269.4Z" fill="#4e4e4e" stroke="#585858" stroke-width="0.5"/>
<path d="M783 255.8 L789.6 270 L783 266.8 L776.6 270Z" fill="#141414"/>
<circle cx="806.6" cy="259.6" r="3.5" fill="none" stroke="#161616" stroke-width="1.3"/><path d="M808.8 262.4 L813.8 269" stroke="#161616" stroke-width="1.8"/>
<rect x="825.4" y="262" width="11.4" height="7.8" rx="1" fill="none" stroke="#161616" stroke-width="1.2"/><path d="M827.6 262 V259.4 A3.6 3.6 0 0 1 834.6 258.4" fill="none" stroke="#161616" stroke-width="1.2"/><rect x="830.4" y="264.4" width="1.6" height="3" fill="#161616"/>
<circle cx="848.8" cy="262.6" r="6.3" fill="none" stroke="#161616" stroke-width="1.2"/><circle cx="848.8" cy="262.6" r="3.5" fill="none" stroke="#161616" stroke-width="1.2"/><circle cx="848.8" cy="262.6" r="1.1" fill="#161616"/>
<rect x="862" y="255.8" width="10.4" height="13.6" fill="none" stroke="#161616" stroke-width="1.1"/><path d="M862 256.8 H872.4" stroke="#161616" stroke-width="2.4"/><path d="M864.2 264 H870.2 M867.2 261 V267" stroke="#161616" stroke-width="1.3"/>
<circle cx="862.9" cy="372.1" r="8" fill="#cfcfcf" stroke="#1e1e1e" stroke-width="1"/><path d="M858.3 367.2 L866.9 370.4 L864.6 371.9 L868.6 376 L867.3 377.2 L863.3 373.2 L861.6 375.6Z" fill="#111"/>
<path d="M760.6 453 L761.6 450.4 L769 443 L770.8 444.8 L763.4 452.2Z" fill="#808080" stroke="#262626" stroke-width="0.7"/><path d="M768.4 442.2 L770.8 439.8 a1.7 1.7 0 0 1 2.6 2.4 L771.2 444.8Z" fill="#3a3a3a"/><path d="M767.4 441.6 L772.4 446.4" stroke="#343434" stroke-width="1.5"/>
</svg>
</body></html>
